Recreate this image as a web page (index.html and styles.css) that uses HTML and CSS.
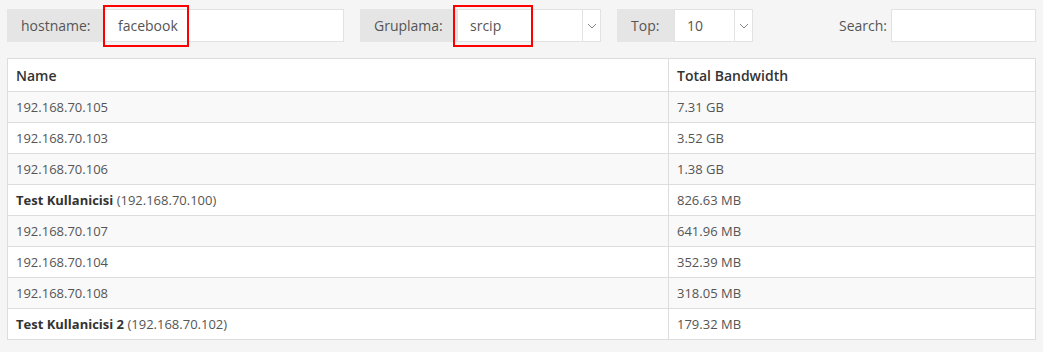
FILE: index.html
```html
<!DOCTYPE html>
<html>
<head>
<meta charset="utf-8">
<link rel="stylesheet" href="styles.css">
</head>
<body>
<div class="toolbar">
  <div class="group g-host">
    <span class="label">hostname:</span>
    <div class="input host-input">facebook</div>
    <span class="mark mark-host"></span>
  </div>
  <div class="group g-grup">
    <span class="label">Gruplama:</span>
    <div class="select grup-select"><span class="val">srcip</span><span class="arrow"><svg width="10" height="6" viewBox="0 0 10 6"><path d="M1 1l4 4 4-4" fill="none" stroke="#888" stroke-width="1"/></svg></span></div>
    <span class="mark mark-grup"></span>
  </div>
  <div class="group g-top">
    <span class="label">Top:</span>
    <div class="select top-select"><span class="val">10</span><span class="arrow"><svg width="10" height="6" viewBox="0 0 10 6"><path d="M1 1l4 4 4-4" fill="none" stroke="#888" stroke-width="1"/></svg></span></div>
  </div>
  <div class="search">
    <span class="search-label">Search:</span>
    <div class="input search-input"></div>
  </div>
</div>
<table class="grid">
  <thead>
    <tr><th class="c1">Name</th><th>Total Bandwidth</th></tr>
  </thead>
  <tbody>
    <tr><td>192.168.70.105</td><td>7.31 GB</td></tr>
    <tr><td>192.168.70.103</td><td>3.52 GB</td></tr>
    <tr><td>192.168.70.106</td><td>1.38 GB</td></tr>
    <tr><td><b>Test Kullanicisi</b> (192.168.70.100)</td><td>826.63 MB</td></tr>
    <tr><td>192.168.70.107</td><td>641.96 MB</td></tr>
    <tr><td>192.168.70.104</td><td>352.39 MB</td></tr>
    <tr><td>192.168.70.108</td><td>318.05 MB</td></tr>
    <tr><td><b>Test Kullanicisi 2</b> (192.168.70.102)</td><td>179.32 MB</td></tr>
  </tbody>
</table>
</body>
</html>
```
FILE: styles.css
```css
html, body {
  margin: 0;
  background: #f5f5f5;
}
body {
  padding: 9px 7px 0 7px;
  font-family: "Open Sans", "Liberation Sans", sans-serif;
  color: #444;
}
.toolbar {
  display: flex;
  align-items: stretch;
  height: 33px;
  gap: 16px;
}
.group {
  position: relative;
  display: flex;
  height: 33px;
}
.label {
  background: #e5e5e5;
  color: #555;
  font-size: 14px;
  display: flex;
  align-items: center;
  padding-left: 14px;
  box-sizing: border-box;
}
.g-host .label { width: 96px; }
.g-grup .label { width: 97px; }
.g-top .label { width: 57px; }
.input, .select {
  background: #fff;
  border: 1px solid #e2e2e2;
  box-sizing: border-box;
  height: 33px;
  font-size: 14px;
  color: #555;
  display: flex;
  align-items: center;
}
.host-input { width: 241px; padding-left: 14px; }
.select .val { flex: 1; padding-left: 12px; }
.grup-select { width: 144px; }
.top-select { width: 79px; }
.arrow {
  width: 17px;
  height: 100%;
  border-left: 1px solid #e2e2e2;
  display: flex;
  align-items: center;
  justify-content: center;
}
.mark {
  position: absolute;
  top: -4px;
  height: 42px;
  border: 2px solid #f00;
  box-sizing: border-box;
}
.mark-host { left: 96px; width: 86px; }
.mark-grup { left: 93px; width: 80px; }
.search {
  margin-left: auto;
  display: flex;
  align-items: center;
  gap: 4px;
}
.search-label {
  font-size: 14px;
  color: #555;
}
.search-input { width: 145px; }
.grid {
  margin-top: 16px;
  width: 1029px;
  border-collapse: collapse;
  background: #fff;
  font-size: 13px;
  color: #555;
}
.grid th, .grid td {
  border: 1px solid #ddd;
  text-align: left;
  padding: 0 8px;
}
.grid th {
  height: 32px;
  font-size: 14px;
  font-weight: 600;
  color: #333;
}
.grid td {
  height: 30px;
}
.grid th.c1 { width: 644px; }
.grid tbody tr:nth-child(odd) { background: #f9f9f9; }
.grid td b { font-weight: 700; color: #333; }
```
